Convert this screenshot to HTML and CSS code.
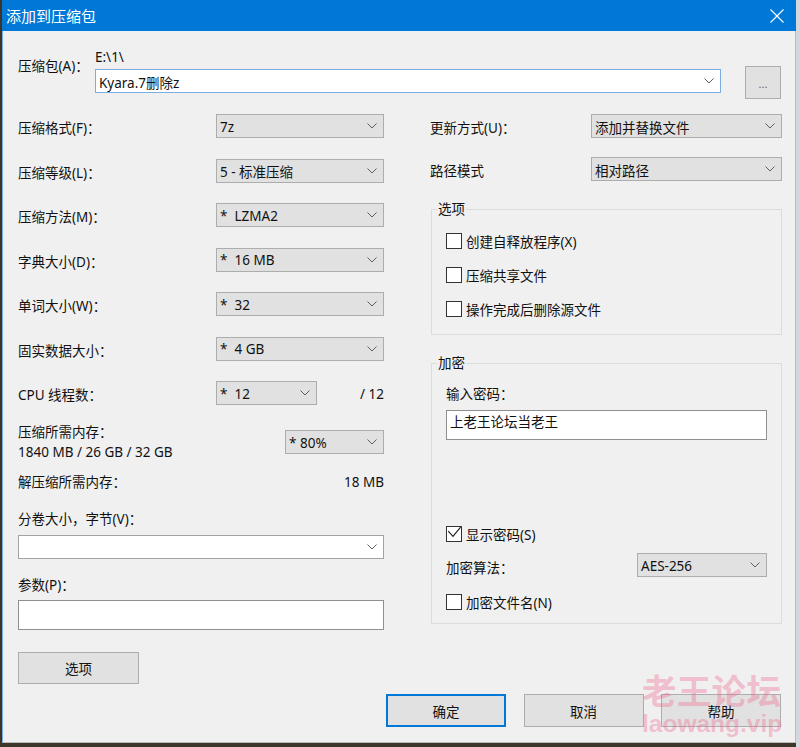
FILE: index.html
```html
<!DOCTYPE html>
<html lang="zh-CN">
<head>
<meta charset="utf-8">
<title>添加到压缩包</title>
<link rel="stylesheet" href="styles.css">
</head>
<body>
<div class="window">
  <div class="titlebar">
    <span class="title">添加到压缩包</span>
    <svg class="close" width="14" height="14" viewBox="0 0 14 14"><path d="M0.5 0.5L13.5 13.5M13.5 0.5L0.5 13.5" stroke="#fff" stroke-width="1.2" fill="none"/></svg>
  </div>
  <div class="content">
    <div class="archive">
      <div class="archive-label">压缩包(A)：</div>
      <div class="archive-col">
        <div class="path">E:\1\</div>
        <div class="combo combo-focus"><span class="val">Kyara.7删除z</span><svg class="chev" width="10" height="6" viewBox="0 0 10 6"><path d="M0.5 0.5L5 5L9.5 0.5" /></svg></div>
      </div>
      <div class="btn browse">...</div>
    </div>

    <div class="main">
      <div class="left">
        <div class="rows">
          <div class="row"><span class="lbl">压缩格式(F)：</span><div class="select w168"><span class="val">7z</span><svg class="chev" width="10" height="6" viewBox="0 0 10 6"><path d="M0.5 0.5L5 5L9.5 0.5" /></svg></div></div>
          <div class="row"><span class="lbl">压缩等级(L)：</span><div class="select w168"><span class="val">5 - 标准压缩</span><svg class="chev" width="10" height="6" viewBox="0 0 10 6"><path d="M0.5 0.5L5 5L9.5 0.5" /></svg></div></div>
          <div class="row"><span class="lbl">压缩方法(M)：</span><div class="select w168"><span class="val">*&nbsp; LZMA2</span><svg class="chev" width="10" height="6" viewBox="0 0 10 6"><path d="M0.5 0.5L5 5L9.5 0.5" /></svg></div></div>
          <div class="row"><span class="lbl">字典大小(D)：</span><div class="select w168"><span class="val">*&nbsp; 16 MB</span><svg class="chev" width="10" height="6" viewBox="0 0 10 6"><path d="M0.5 0.5L5 5L9.5 0.5" /></svg></div></div>
          <div class="row"><span class="lbl">单词大小(W)：</span><div class="select w168"><span class="val">*&nbsp; 32</span><svg class="chev" width="10" height="6" viewBox="0 0 10 6"><path d="M0.5 0.5L5 5L9.5 0.5" /></svg></div></div>
          <div class="row"><span class="lbl">固实数据大小：</span><div class="select w168"><span class="val">*&nbsp; 4 GB</span><svg class="chev" width="10" height="6" viewBox="0 0 10 6"><path d="M0.5 0.5L5 5L9.5 0.5" /></svg></div></div>
          <div class="row"><span class="lbl">CPU 线程数：</span><div class="select w101"><span class="val">*&nbsp; 12</span><svg class="chev" width="10" height="6" viewBox="0 0 10 6"><path d="M0.5 0.5L5 5L9.5 0.5" /></svg></div><span class="cpu-max">/ 12</span></div>
        </div>

        <div class="mem">
          <div class="mem-text">
            <div>压缩所需内存：</div>
            <div>1840 MB / 26 GB / 32 GB</div>
          </div>
          <div class="select w99"><span class="val">* 80%</span><svg class="chev" width="10" height="6" viewBox="0 0 10 6"><path d="M0.5 0.5L5 5L9.5 0.5" /></svg></div>
        </div>

        <div class="unpack"><span>解压缩所需内存：</span><span>18 MB</span></div>

        <div class="vol-label">分卷大小，字节(V)：</div>
        <div class="combo vol"><span class="val"></span><svg class="chev" width="10" height="6" viewBox="0 0 10 6"><path d="M0.5 0.5L5 5L9.5 0.5" /></svg></div>

        <div class="param-label">参数(P)：</div>
        <div class="textbox param"></div>

        <div class="btn options">选项</div>
      </div>

      <div class="right">
        <div class="urow"><span class="ulbl">更新方式(U)：</span><div class="select w191"><span class="val">添加并替换文件</span><svg class="chev" width="10" height="6" viewBox="0 0 10 6"><path d="M0.5 0.5L5 5L9.5 0.5" /></svg></div></div>
        <div class="urow second"><span class="ulbl">路径模式</span><div class="select w191"><span class="val">相对路径</span><svg class="chev" width="10" height="6" viewBox="0 0 10 6"><path d="M0.5 0.5L5 5L9.5 0.5" /></svg></div></div>

        <div class="group opts">
          <div class="group-title">选项</div>
          <div class="check first"><span class="cb"></span><span>创建自释放程序(X)</span></div>
          <div class="check"><span class="cb"></span><span>压缩共享文件</span></div>
          <div class="check"><span class="cb"></span><span>操作完成后删除源文件</span></div>
        </div>

        <div class="group enc">
          <div class="group-title">加密</div>
          <div class="pw-label">输入密码：</div>
          <div class="textbox pw">上老王论坛当老王</div>
          <div class="check show"><span class="cb"><svg width="16" height="16" viewBox="0 0 16 16"><path d="M2.2 5.2L7 10.4L14.6 1.2" fill="none" stroke="#222" stroke-width="1.2"/></svg></span><span>显示密码(S)</span></div>
          <div class="algo"><span>加密算法：</span><div class="select w130"><span class="val">AES-256</span><svg class="chev" width="10" height="6" viewBox="0 0 10 6"><path d="M0.5 0.5L5 5L9.5 0.5" /></svg></div></div>
          <div class="check encname"><span class="cb"></span><span>加密文件名(N)</span></div>
        </div>
      </div>
    </div>

    <div class="footer">
      <div class="btn dlg default">确定</div>
      <div class="btn dlg">取消</div>
      <div class="btn dlg">帮助</div>
    </div>
  </div>
  <div class="watermark">
    <div class="wm-cn">老王论坛</div>
    <div class="wm-en">laowang.vip</div>
  </div>
</div>
</body>
</html>
```

FILE: styles.css
```css
html, body {
  margin: 0;
  padding: 0;
}
body {
  width: 800px;
  height: 747px;
  overflow: hidden;
  background: linear-gradient(to right, #3d3628 0, #3d3628 796px, #d3d8de 796px);
  font-family: "Noto Sans", "Noto Sans CJK SC", sans-serif;
  font-size: 13.5px;
  color: #111;
}
.window {
  position: relative;
  margin-left: 2px;
  width: 794px;
  height: 743px;
  box-sizing: border-box;
  background: #f0f0f0;
  border-left: 1px solid #79ace0;
  border-right: 1px solid #b9bcc0;
  border-bottom: 1px solid #b9bcc0;
}
.titlebar {
  height: 31px;
  background: #0078d7;
  display: flex;
  align-items: center;
  justify-content: space-between;
  padding-left: 3px;
  margin-left: -1px;
  margin-right: -1px;
}
.title {
  color: #fff;
  font-size: 15px;
  line-height: 20px;
  font-family: "Noto Sans CJK SC", sans-serif;
  padding-left: 1px;
}
.close {
  margin-right: 12px;
  margin-top: 1px;
}
.content {
  padding-left: 15px;
  padding-right: 13px;
}

/* archive row */
.archive {
  display: flex;
  padding-top: 18px;
}
.archive-label {
  width: 77px;
  line-height: 17px;
  margin-top: 9px;
  flex: none;
}
.archive-col {
  width: 626px;
  flex: none;
}
.path {
  line-height: 17px;
}
.combo {
  display: flex;
  align-items: center;
  height: 24px;
  box-sizing: border-box;
  background: #fff;
  border: 1px solid #a3a3a3;
  padding-left: 3px;
}
.combo-focus {
  margin-top: 3px;
  border-color: #7aaee0;
}
.chev {
  margin-left: auto;
  margin-right: 6px;
  flex: none;
}
.chev path {
  fill: none;
  stroke: #5f5f5f;
  stroke-width: 1;
}
.btn {
  display: flex;
  align-items: center;
  justify-content: center;
  box-sizing: border-box;
  background: #e1e1e1;
  border: 1px solid #adadad;
}
.browse {
  margin-left: 24px;
  margin-top: 17px;
  width: 36px;
  height: 33px;
  flex: none;
  color: #666;
  font-size: 11px;
  padding-top: 2px;
}

/* main */
.main {
  display: flex;
  gap: 46px;
  margin-top: 15px;
}
.left {
  width: 366px;
  flex: none;
}
.right {
  width: 352px;
  flex: none;
}
.rows {
  display: flex;
  flex-direction: column;
  gap: 20.5px;
}
.row {
  display: flex;
  align-items: center;
  height: 24px;
}
.lbl {
  width: 198px;
  flex: none;
  padding-top: 2px;
}
.select {
  display: flex;
  align-items: center;
  height: 24px;
  box-sizing: border-box;
  background: #e1e1e1;
  border: 1px solid #adadad;
  padding-left: 3px;
  flex: none;
}
.val {
  white-space: pre;
  padding-top: 1px;
}
.w168 { width: 168px; }
.w101 { width: 101px; }
.w99 { width: 99px; margin-left: auto; }
.w191 { width: 191px; }
.w130 { width: 130px; margin-left: auto; }
.cpu-max {
  margin-left: auto;
  padding-top: 2px;
}
.mem {
  display: flex;
  align-items: center;
  margin-top: 17px;
}
.mem-text {
  line-height: 20px;
}
.unpack {
  display: flex;
  justify-content: space-between;
  margin-top: 10px;
  line-height: 20px;
}
.vol-label {
  margin-top: 17px;
  line-height: 20px;
}
.vol {
  margin-top: 6px;
  border-color: #a3a3a3;
}
.param-label {
  margin-top: 16px;
  line-height: 20px;
}
.textbox {
  box-sizing: border-box;
  background: #fff;
  border: 1px solid #8f8f8f;
}
.param {
  margin-top: 5px;
  height: 30px;
}
.options {
  margin-top: 22px;
  width: 121px;
  height: 32px;
}

/* right column */
.urow {
  display: flex;
  align-items: center;
  height: 24px;
}
.urow.second {
  margin-top: 19px;
}
.ulbl {
  width: 161px;
  flex: none;
  padding-top: 2px;
}
.group {
  margin-left: 1px;
  border: 1px solid #dcdcdc;
  box-sizing: border-box;
  padding: 0 14px;
}
.group-title {
  line-height: 18px;
  margin-top: -10px;
  margin-left: -9px;
  padding: 0 1px;
  width: fit-content;
  background: #f0f0f0;
}
.opts {
  margin-top: 28px;
  height: 126px;
}
.enc {
  margin-top: 28px;
  height: 261px;
}
.check {
  display: flex;
  align-items: center;
  height: 18px;
  margin-top: 16px;
}
.check.first {
  margin-top: 14px;
}
.cb {
  width: 16px;
  height: 16px;
  box-sizing: border-box;
  border: 1px solid #333;
  background: #fff;
  margin-right: 4px;
  flex: none;
  position: relative;
}
.cb svg {
  position: absolute;
  left: -1px;
  top: -1px;
}
.pw-label {
  margin-top: 13px;
  line-height: 18px;
}
.pw {
  margin-top: 7px;
  height: 30px;
  width: 321px;
  padding-left: 3px;
  line-height: 22px;
}
.check.show {
  margin-top: 85px;
}
.algo {
  display: flex;
  align-items: center;
  height: 24px;
  margin-top: 10px;
  width: 321px;
}
.algo > span {
  padding-top: 3px;
}
.check.encname {
  margin-top: 16px;
}

/* footer */
.footer {
  display: flex;
  justify-content: flex-end;
  gap: 17.5px;
  margin-top: 10px;
  padding-right: 1px;
}
.dlg {
  width: 120px;
  height: 33px;
}
.dlg.default {
  border: 2px solid #0078d7;
}

/* watermark overlay */
.watermark {
  position: absolute;
  left: 639px;
  top: 671px;
  pointer-events: none;
  color: rgba(240, 100, 140, 0.36);
  font-weight: bold;
}
.wm-cn {
  font-family: "Noto Sans CJK SC", sans-serif;
  font-size: 34.5px;
  line-height: 36px;
  letter-spacing: 0.3px;
}
.wm-en {
  font-family: "Liberation Sans", sans-serif;
  font-size: 24.5px;
  line-height: 28px;
  margin-top: 3px;
}
```
